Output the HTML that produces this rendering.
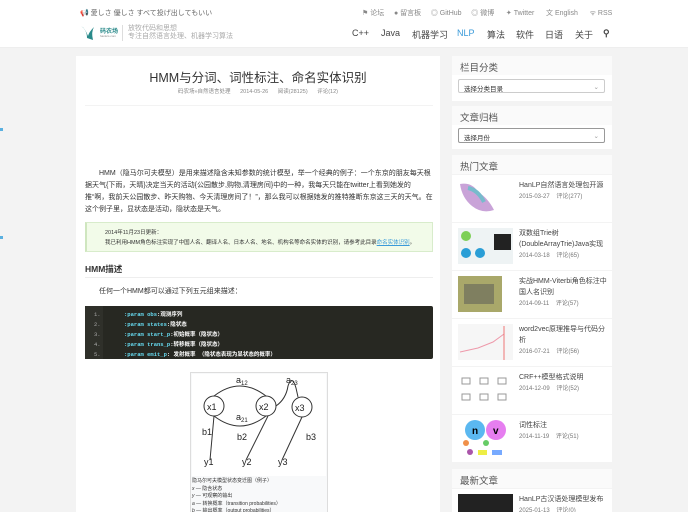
<!DOCTYPE html>
<html><head><meta charset="utf-8"><style>
*{margin:0;padding:0;box-sizing:border-box}
html,body{width:688px;height:512px;overflow:hidden}
body{background:#f3f3f3;font-family:"Liberation Sans","Noto Sans CJK SC",sans-serif;color:#333;position:relative}
.abs{position:absolute}
.hdr{left:0;top:0;width:688px;height:48px;background:#fff;border-bottom:1px solid #eee}
.small{font-size:7px;color:#888}
.nav span{position:absolute;font-size:9px;color:#444;top:28px}
.card{left:76px;top:56px;width:364px;height:456px;background:#fff}
.side{background:#fff}
.sh{font-size:9.5px;color:#555;background:#fafafa}
.sel{border:1px solid #ccc;border-radius:2px;font-size:6.5px;color:#333;padding:3px 5px;background:#fff}
.it{position:absolute;left:452px;width:160px;height:47px;background:#fff}
.it .th{position:absolute;left:6px;top:5px;width:55px;height:36px}
.it .t{position:absolute;left:67px;top:5px;font-size:7px;color:#444;line-height:11px;width:90px}
.it .d{font-size:6px;color:#777}
p.body{font-size:7px;line-height:12px;color:#333}
code{font-family:"Liberation Mono","Noto Sans CJK SC",monospace}
</style></head><body>
<div class="abs hdr"></div>
<div class="abs small" style="left:80px;top:8px;color:#666">📢 愛しさ 優しさ すべて投げ出してもいい</div>
<div class="abs small" style="left:362px;top:8px;color:#888">⚑ 论坛&nbsp;&nbsp;&nbsp;&nbsp;&nbsp;● 留言板&nbsp;&nbsp;&nbsp;&nbsp;&nbsp;◎ GitHub&nbsp;&nbsp;&nbsp;&nbsp;&nbsp;◎ 微博&nbsp;&nbsp;&nbsp;&nbsp;&nbsp;&nbsp;✦ Twitter&nbsp;&nbsp;&nbsp;&nbsp;&nbsp;&nbsp;文 English&nbsp;&nbsp;&nbsp;&nbsp;&nbsp;&nbsp;ᯤ RSS</div>
<svg class="abs" style="left:79px;top:24px" width="16" height="18"><path d="M2 2 Q8 6 8 14 L14 16 Q12 8 15 3 Q10 8 9 12 Q6 4 2 2Z" fill="#2a8a8a"/></svg>
<div class="abs" style="left:100px;top:26px;font-size:6px;color:#2a8a8a;font-weight:bold">码农场</div>
<div class="abs" style="left:100px;top:34px;font-size:3px;color:#888">hankcs.com</div>
<div class="abs" style="left:122px;top:25px;width:1px;height:16px;background:#ddd"></div>
<div class="abs small" style="left:128px;top:25px;line-height:8px;color:#aaa">放牧代码和思想<br>专注自然语言处理、机器学习算法</div>
<div class="nav">
<span style="left:352px">C++</span><span style="left:381px">Java</span><span style="left:412px">机器学习</span><span style="left:457px;color:#3a9ad9">NLP</span><span style="left:487px">算法</span><span style="left:516px">软件</span><span style="left:545px">日语</span><span style="left:575px">关于</span><span style="left:603px;font-weight:bold">⚲</span>
</div>
<div class="abs" style="left:0;top:128px;width:3px;height:3px;background:#5ab0e0"></div>
<div class="abs" style="left:0;top:236px;width:3px;height:3px;background:#5ab0e0"></div>

<div class="abs card"></div>
<div class="abs" style="left:76px;top:67px;width:364px;text-align:center;font-size:12.5px;color:#333">HMM与分词、词性标注、命名实体识别</div>
<div class="abs" style="left:76px;top:87px;width:364px;text-align:center;font-size:5.5px;color:#888;word-spacing:8px">码农场»自然语言处理 2014-05-26 阅读(28125) 评论(12)</div>
<div class="abs" style="left:85px;top:105px;width:348px;height:1px;background:#f3f3f3"></div>
<p class="abs body" style="left:85px;top:168px;width:348px;text-indent:14px">HMM（隐马尔可夫模型）是用来描述隐含未知参数的统计模型，举一个经典的例子：一个东京的朋友每天根据天气{下雨，天晴}决定当天的活动{公园散步,购物,清理房间}中的一种，我每天只能在twitter上看到她发的推“啊，我前天公园散步、昨天购物、今天清理房间了！”，那么我可以根据她发的推特推断东京这三天的天气。在这个例子里，显状态是活动，隐状态是天气。</p>
<div class="abs" style="left:85px;top:222px;width:348px;height:30px;background:#f2fbe9;border:1px solid #d8eccb;border-left:2px solid #cfe6bf;font-size:5.5px;color:#333;padding:5px 0 0 18px;line-height:10px">2014年11月23日更新：<br>我已利用HMM角色标注实现了中国人名、翻译人名、日本人名、地名、机构名等命名实体的识别，请参考此目录<span style="color:#3a9ad9;text-decoration:underline">命名实体识别</span>。</div>
<div class="abs" style="left:85px;top:263px;font-size:8.5px;font-weight:bold;color:#333">HMM描述</div>
<div class="abs" style="left:85px;top:277px;width:348px;height:1px;background:#eee"></div>
<div class="abs" style="left:99px;top:286px;font-size:7px;color:#333">任何一个HMM都可以通过下列五元组来描述：</div>
<div class="abs" style="left:85px;top:306px;width:348px;height:53px;background:#272822;border-radius:2px"></div>
<div class="abs" style="left:85px;top:306px;width:18px;height:53px;background:#2f302a"></div>
<div class="abs" style="left:94px;top:310px;font-size:5.5px;line-height:9px;color:#aaa"><code>1.<br>2.<br>3.<br>4.<br>5.</code></div>
<div class="abs" style="left:124px;top:310px;font-size:5.5px;line-height:9px;color:#fff;font-weight:bold"><code><span style="color:#66d9ef">:param obs</span>:观测序列<br><span style="color:#66d9ef">:param states</span>:隐状态<br><span style="color:#66d9ef">:param start_p</span>:初始概率（隐状态）<br><span style="color:#66d9ef">:param trans_p</span>:转移概率（隐状态）<br><span style="color:#66d9ef">:param emit_p</span>: 发射概率 （隐状态表现为显状态的概率）</code></div>
<div class="abs" style="left:190px;top:372px;width:138px;height:150px;background:#f8f9fa;border:1px solid #ddd"></div>
<svg class="abs" style="left:192px;top:374px" width="134" height="102" viewBox="0 0 134 102">
<rect width="134" height="102" fill="#fff"/>
<g fill="none" stroke="#333" stroke-width="1">
<circle cx="22" cy="32" r="10"/><circle cx="74" cy="32" r="10"/><circle cx="110" cy="33" r="10"/>
<path d="M22 22 Q48 2 74 22"/><path d="M22 42 Q48 62 74 42"/><path d="M84 32 Q94 25 96 12 Q100 0 104 14 L106 23"/>
<path d="M22 42 L18 86"/><path d="M76 42 L54 86"/><path d="M110 43 L90 86"/></g>
<g font-family="Liberation Sans" font-size="9" fill="#222"><text x="15" y="36">x1</text><text x="67" y="36">x2</text><text x="103" y="37">x3</text>
<text x="44" y="9">a<tspan font-size="6" dy="2">12</tspan></text><text x="94" y="9">a<tspan font-size="6" dy="2">23</tspan></text><text x="44" y="46">a<tspan font-size="6" dy="2">21</tspan></text>
<text x="10" y="61">b1</text><text x="45" y="66">b2</text><text x="114" y="66">b3</text><text x="12" y="91">y1</text><text x="50" y="91">y2</text><text x="86" y="91">y3</text></g></svg>
<div class="abs" style="left:192px;top:478px;font-size:5px;line-height:7.5px;color:#333">隐马尔可夫模型状态变迁图（例子）<br><i>x</i> — 隐含状态<br><i>y</i> — 可观察的输出<br><i>a</i> — 转换概率（transition probabilities）<br><i>b</i> — 输出概率（output probabilities）</div>

<div class="abs side" style="left:452px;top:56px;width:160px;height:45px"></div>
<div class="abs sh" style="left:452px;top:56px;width:160px;height:19px;padding:4px 8px">栏目分类</div>
<div class="abs sel" style="left:458px;top:79px;width:147px;height:14px">选择分类目录<span style="float:right;color:#999">⌄</span></div>
<div class="abs side" style="left:452px;top:106px;width:160px;height:43px"></div>
<div class="abs sh" style="left:452px;top:106px;width:160px;height:19px;padding:4px 8px">文章归档</div>
<div class="abs sel" style="left:458px;top:128px;width:147px;height:15px;border-color:#999">选择月份<span style="float:right;color:#999">⌄</span></div>
<div class="abs sh" style="left:452px;top:155px;width:160px;height:19px;padding:4px 8px">热门文章</div>

<div class="it" style="top:175px"><svg class="th" viewBox="0 0 55 36"><path d="M2 4 Q14 2 20 12 Q30 18 36 30 Q24 34 14 26 Q4 18 2 4Z" fill="#c9a3d8"/><path d="M10 8 Q20 10 26 22" stroke="#7bc" stroke-width="4" fill="none"/></svg><div class="t">HanLP自然语言处理包开源<br><span class="d">2015-03-27&nbsp;&nbsp;&nbsp;&nbsp;评论(277)</span></div></div>
<div class="it" style="top:223px"><svg class="th" viewBox="0 0 55 36"><rect width="55" height="36" fill="#eef3f4"/><circle cx="8" cy="8" r="5" fill="#7ccf55"/><circle cx="8" cy="25" r="5" fill="#2a9ed6"/><circle cx="22" cy="25" r="5" fill="#2a9ed6"/><rect x="36" y="6" width="17" height="16" fill="#222"/></svg><div class="t">双数组Trie树(DoubleArrayTrie)Java实现<br><span class="d">2014-03-18&nbsp;&nbsp;&nbsp;&nbsp;评论(65)</span></div></div>
<div class="it" style="top:271px"><svg class="th" viewBox="0 0 55 36"><rect x="0" y="0" width="44" height="36" fill="#a9a86a"/><rect x="6" y="8" width="30" height="20" fill="#555" opacity=".5"/></svg><div class="t">实战HMM-Viterbi角色标注中国人名识别<br><span class="d">2014-09-11&nbsp;&nbsp;&nbsp;&nbsp;评论(57)</span></div></div>
<div class="it" style="top:319px"><svg class="th" viewBox="0 0 55 36"><rect width="55" height="36" fill="#f6f6f6"/><path d="M2 28 L20 24 L35 18 L46 10" stroke="#e9a" fill="none"/><line x1="46" y1="2" x2="46" y2="36" stroke="#e77"/></svg><div class="t">word2vec原理推导与代码分析<br><span class="d">2016-07-21&nbsp;&nbsp;&nbsp;&nbsp;评论(56)</span></div></div>
<div class="it" style="top:367px"><svg class="th" viewBox="0 0 55 36"><g fill="none" stroke="#999"><rect x="4" y="6" width="8" height="6"/><rect x="22" y="6" width="8" height="6"/><rect x="40" y="6" width="8" height="6"/><rect x="4" y="22" width="8" height="6"/><rect x="22" y="22" width="8" height="6"/><rect x="40" y="22" width="8" height="6"/></g></svg><div class="t">CRF++模型格式说明<br><span class="d">2014-12-09&nbsp;&nbsp;&nbsp;&nbsp;评论(52)</span></div></div>
<div class="it" style="top:415px"><svg class="th" viewBox="0 0 55 36"><circle cx="17" cy="10" r="10" fill="#5bb8f0"/><circle cx="38" cy="10" r="10" fill="#e67ef0"/><text x="14" y="14" font-size="10" font-weight="bold" font-family="Liberation Sans">n</text><text x="35" y="14" font-size="10" font-weight="bold" font-family="Liberation Sans">v</text><circle cx="8" cy="23" r="3" fill="#f0904a"/><circle cx="28" cy="23" r="3" fill="#6c6"/><circle cx="12" cy="32" r="3" fill="#a5a"/><rect x="20" y="30" width="9" height="5" fill="#ee4"/><rect x="34" y="30" width="10" height="5" fill="#7af"/></svg><div class="t">词性标注<br><span class="d">2014-11-19&nbsp;&nbsp;&nbsp;&nbsp;评论(51)</span></div></div>
<div class="abs sh" style="left:452px;top:469px;width:160px;height:19px;padding:4px 8px;background:#fafafa">最新文章</div>
<div class="it" style="top:489px"><div class="th" style="background:#222"></div><div class="t">HanLP古汉语处理模型发布<br><span class="d">2025-01-13&nbsp;&nbsp;&nbsp;&nbsp;评论(0)</span></div></div>
</body></html>
